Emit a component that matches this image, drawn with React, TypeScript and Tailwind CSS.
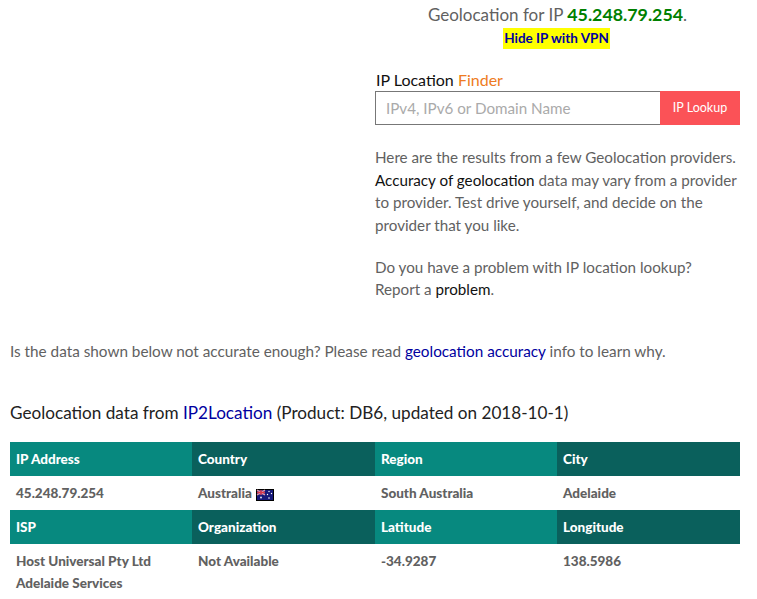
const FONT = "font-['Lato','Open_Sans',sans-serif]";

const headers1 = ["IP Address", "Country", "Region", "City"];
const headers2 = ["ISP", "Organization", "Latitude", "Longitude"];

const AusFlag = () => (
  <svg width="18" height="12" viewBox="0 0 18 12" className="inline-block ml-1 -mb-[1px]">
    <rect x="0" y="0" width="18" height="12" fill="#000" />
    <rect x="1" y="1" width="16" height="10" fill="#16187a" />
    <rect x="1" y="1" width="8" height="5" fill="#4a3f9a" />
    <path d="M1 1L9 6M9 1L1 6" stroke="#e8a0a8" strokeWidth="1.1" />
    <path d="M5 1V6M1 3.5H9" stroke="#d8364a" strokeWidth="1.3" />
    <circle cx="5" cy="8.5" r="1" fill="#dfe0f5" />
    <circle cx="13" cy="2.5" r="0.7" fill="#fff" />
    <circle cx="15.5" cy="4.5" r="0.7" fill="#fff" />
    <circle cx="11.5" cy="5.5" r="0.7" fill="#fff" />
    <circle cx="13" cy="9" r="0.8" fill="#fff" />
  </svg>
);

const HeaderRow = ({ cells }: { cells: string[] }) => (
  <div className="grid grid-cols-[182px_183px_182px_183px] h-[34px]">
    {cells.map((c, i) => (
      <div
        key={c}
        className={`flex items-center px-[6px] text-white ${i % 2 === 0 ? "bg-[#07897f]" : "bg-[#0a605c]"}`}
      >
        {c}
      </div>
    ))}
  </div>
);

export default function App() {
  return (
    <div className={`w-[757px] h-[599px] overflow-hidden bg-white pl-[10px] pr-[17px] text-[#616161] ${FONT}`}>
      <div className="flex">
        <div className="w-[365px] shrink-0" />
        <div className="flex-1">
          <div className="pt-[3px] text-center text-[17px] leading-[22px]">
            Geolocation for IP <b className="text-[17.8px] text-[#008000]">45.248.79.254</b>.
          </div>
          <div className="text-center leading-[21px]">
            <a className="inline-block mr-[2px] bg-[#ffff00] px-[1px] text-[13.5px] font-bold text-[#0000a0]">Hide IP with VPN</a>
          </div>
          <div className="mt-[20px] text-[16px] leading-[22px] text-[#111] pl-[1px]">
            IP Location <span className="text-[#ee7b22]">Finder</span>
          </div>
          <div className="flex h-[34px] w-[365px]">
            <div className="flex flex-1 items-center border border-[#777] border-r-0 pl-[10px] text-[15.2px] text-[#aaaaaa]">
              IPv4, IPv6 or Domain Name
            </div>
            <div className="flex w-[80px] items-center justify-center bg-[#fb5257] text-[12.5px] text-white">IP Lookup</div>
          </div>
          <p className="mt-[21px] text-[15.2px] leading-[22.5px]">
            Here are the results from a few Geolocation providers. <span className="text-[#111]">Accuracy of geolocation</span> data may vary from a provider to provider. Test drive yourself, and decide on the provider that you like.
          </p>
          <p className="mt-[20px] text-[15.2px] leading-[22px]">
            Do you have a problem with IP location lookup?
            <br />
            Report a <span className="text-[#111]">problem</span>.
          </p>
        </div>
      </div>
      <p className="mt-[40px] text-[15.3px] leading-[22px]">
        Is the data shown below not accurate enough? Please read <span className="text-[#0000a0]">geolocation accuracy</span> info to learn why.
      </p>
      <h2 className="mt-[39px] text-[17.15px] leading-[24px] text-[#222]">
        Geolocation data from <span className="text-[#0000a0]">IP2Location</span> (Product: DB6, updated on 2018-10-1)
      </h2>
      <div className="mt-[17px] text-[13.5px] font-black">
        <HeaderRow cells={headers1} />
        <div className="grid grid-cols-[182px_183px_182px_183px] h-[34px] items-center">
          <div className="px-[6px]">45.248.79.254</div>
          <div className="px-[6px]">
            Australia
            <AusFlag />
          </div>
          <div className="px-[6px]">South Australia</div>
          <div className="px-[6px]">Adelaide</div>
        </div>
        <HeaderRow cells={headers2} />
        <div className="grid grid-cols-[182px_183px_182px_183px] pt-[6px] leading-[22px]">
          <div className="px-[6px]">
            Host Universal Pty Ltd
            <br />
            Adelaide Services
          </div>
          <div className="px-[6px]">Not Available</div>
          <div className="px-[6px]">-34.9287</div>
          <div className="px-[6px]">138.5986</div>
        </div>
      </div>
    </div>
  );
}
